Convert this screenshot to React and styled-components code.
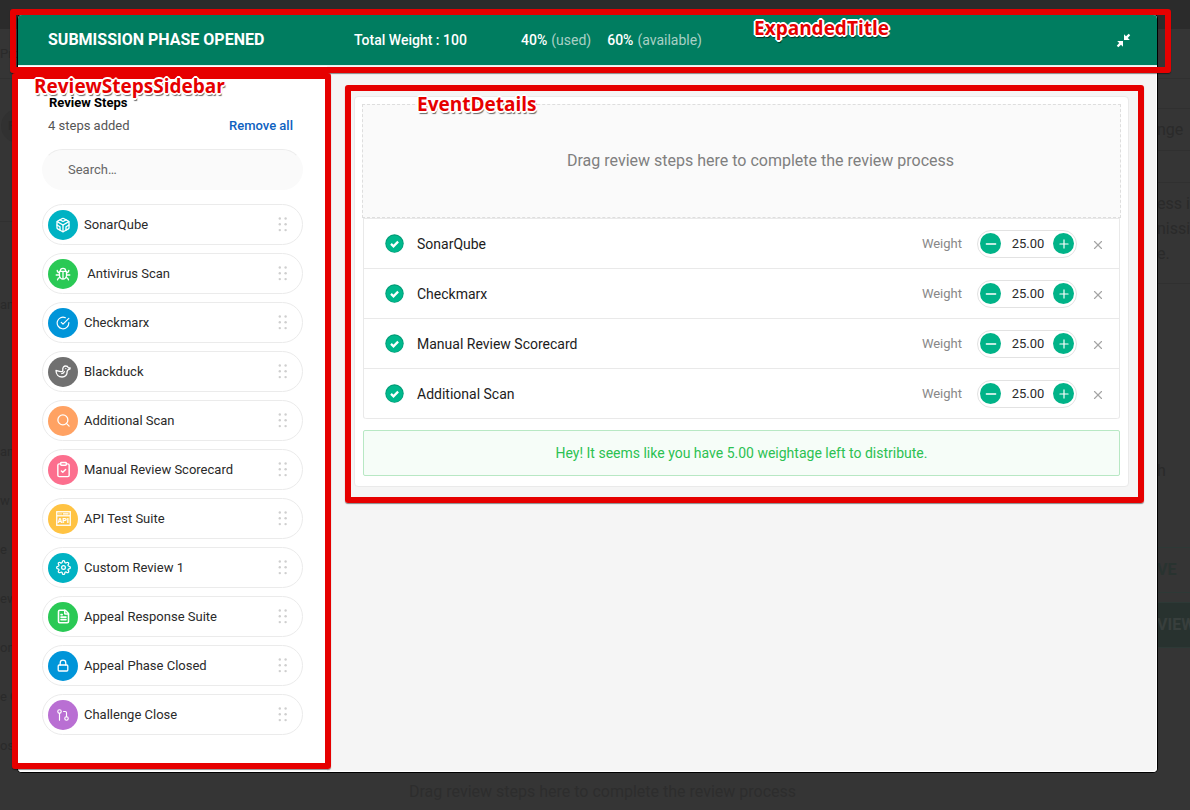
import React from 'react';
import styled, { createGlobalStyle, css } from 'styled-components';
import {
  FiCodesandbox,
  FiCheckCircle,
  FiSearch,
  FiSettings,
  FiGitPullRequest,
} from 'react-icons/fi';
import { ClipboardCheck, FileText, Minus, Plus, X } from 'lucide-react';

const GlobalStyle = createGlobalStyle`
  *, *::before, *::after { box-sizing: border-box; }
  body {
    margin: 0;
    background: #353535;
    color: #2a2a2a;
    font-family: Roboto, "Liberation Sans", sans-serif;
    font-size: 13px;
    line-height: 20px;
  }
  button, input { font: inherit; }
  h1, h2, p, ul { margin: 0; padding: 0; }
  ul { list-style: none; }
`;

const plainButton = css`
  display: inline-flex;
  align-items: center;
  justify-content: center;
  border: 0;
  padding: 0;
  background: none;
  cursor: pointer;
`;

/* ---------- page behind the dialog ---------- */

const Stage = styled.div`
  position: relative;
  display: flex;
  min-height: 100vh;
  padding: 15px 33px 38px 18px;
  overflow: hidden;
`;

const Backdrop = styled.div`
  position: absolute;
  inset: 0;
  display: grid;
  grid-template: 29px 1fr / 18px 1fr 33px;
  background: #353535;
  color: #2a2a2a;
  overflow: hidden;
`;

const BackdropHeader = styled.div`
  grid-column: 1 / -1;
  background: #2b2b2b;
`;

const BackdropColumn = styled.div`
  display: flex;
  flex-direction: column;
  overflow: hidden;
  white-space: nowrap;
`;

const BackdropLine = styled.div`
  display: flex;
  flex: none;
  align-items: center;
  height: ${(p) => p.$height}px;
  font-size: ${(p) => (p.$large ? 16 : 13)}px;
  border-bottom: ${(p) => (p.$rule ? '1px solid #303030' : '0')};
`;

const BackdropPill = styled.span`
  width: 60px;
  height: 34px;
  margin-left: 1px;
  padding: 7px;
  border-radius: 17px 0 0 17px;
  background: #313131;
  font-weight: 700;
`;

const BackdropAction = styled.div`
  display: flex;
  flex: none;
  align-items: center;
  height: 46px;
  margin-bottom: 9px;
  border: solid #2d3936;
  border-width: 1px 0;
  background: ${(p) => (p.$filled ? '#28322f' : 'transparent')};
  color: ${(p) => (p.$filled ? '#383f3d' : '#293330')};
  font-size: 16px;
  font-weight: 700;
`;

const BackdropCenter = styled.div`
  display: flex;
  align-items: flex-end;
`;

const BackdropHint = styled.p`
  width: 100%;
  padding: 0 0 8px 30px;
  text-align: center;
  font-size: 16px;
  color: #2d2d2d;
`;

/* ---------- annotations ---------- */

const Frame = styled.span`
  position: absolute;
  z-index: 2;
  inset: ${(p) => p.$inset};
  border: 6px solid #e60000;
  border-radius: 3px;
  box-shadow: 0 1px 1px rgba(0, 0, 0, 0.45);
  pointer-events: none;
`;

const FrameLabel = styled.span`
  position: absolute;
  z-index: 3;
  top: ${(p) => p.$top}px;
  left: ${(p) => p.$left};
  color: #e60000;
  font: 700 19px/24px "Open Sans", "Noto Sans", sans-serif;
  white-space: nowrap;
  text-shadow: -2px 0 #fff, 2px 0 #fff, 0 -2px #fff, 0 2px #fff,
    -1px -1px #fff, 1px -1px #fff, -1px 1px #fff, 1px 1px #fff,
    1px 3px 1px rgba(0, 0, 0, 0.6);
  pointer-events: none;
`;

/* ---------- dialog ---------- */

const Dialog = styled.main`
  position: relative;
  display: flex;
  flex: 1;
  flex-direction: column;
  min-width: 0;
  border-radius: 4px;
  background: #f5f5f5;
  box-shadow: inset -1px -1px #fff, 0 0 0 1px #000;
`;

const TitleBar = styled.header`
  position: relative;
  z-index: 1;
  display: flex;
  align-items: center;
  height: 51px;
  padding: 0 26px 0 30px;
  border-bottom: 1px solid #e4f0ec;
  border-radius: 4px 4px 0 0;
  background: #007d60;
  color: #fff;
`;

const PhaseTitle = styled.h1`
  flex: 0 0 306px;
  font-size: 16px;
  font-weight: 700;
`;

const WeightSummary = styled.div`
  display: flex;
  flex: 1;
  font-size: 14px;
  white-space: pre;
`;

const TotalWeight = styled.strong`
  flex: 0 0 167px;
  font-weight: 500;
`;

const Share = styled.span`
  margin-right: 16px;
  color: #a9d0c5;

  strong {
    margin-right: 4px;
    color: #fff;
    font-weight: 500;
  }
`;

const CollapseButton = styled.button`
  ${plainButton}
  color: #fff;
`;

const Content = styled.div`
  display: flex;
  flex: 1;
`;

const Sidebar = styled.aside`
  position: relative;
  flex: 0 0 309px;
  padding: 27px 24px 0;
  border-radius: 0 0 0 4px;
  background: #fff;
`;

const SidebarTitle = styled.h2`
  padding-left: 7px;
  color: #000;
  font-size: 13px;
  font-weight: 700;
`;

const SidebarMeta = styled.div`
  display: flex;
  justify-content: space-between;
  margin: 3px 0 13px;
  padding: 0 10px 0 6px;
  color: #555;
`;

const RemoveAll = styled.button`
  ${plainButton}
  color: #0d61bf;
  font-weight: 500;
`;

const Search = styled.input`
  display: block;
  width: 100%;
  height: 41px;
  padding: 0 25px;
  border: 1px solid #fafafa;
  border-top-color: #ececec;
  border-radius: 21px;
  background: #fafafa;
  color: #2a2a2a;
  outline: none;

  &::placeholder { color: #666; opacity: 1; }
`;

const StepList = styled.ul`
  display: flex;
  flex-direction: column;
  gap: 8px;
  margin: 14px 0 36px;
`;

const Step = styled.li`
  display: flex;
  align-items: center;
  gap: 6px;
  height: 41px;
  padding: 0 14px 0 5px;
  border: 1px solid #ebebeb;
  border-radius: 21px;
  cursor: grab;
`;

const StepIcon = styled.span`
  display: flex;
  flex: none;
  align-items: center;
  justify-content: center;
  width: 30px;
  height: 30px;
  border-radius: 50%;
  background: ${(p) => p.$color};
  color: #fff;
`;

const StepName = styled.span`
  flex: 1;
  white-space: pre;
`;

const Details = styled.section`
  flex: 1;
  min-width: 0;
  padding: 30px 28px 30px 27px;
`;

const Card = styled.div`
  position: relative;
  padding: 7px 7px 10px;
  border: 1px solid #eaeaea;
  border-radius: 4px;
  background: #fff;
`;

const DropZone = styled.p`
  display: flex;
  align-items: center;
  justify-content: center;
  height: 114px;
  padding-left: 38px;
  border: 1px dashed #dedede;
  background: #fafafa;
  color: #7f7f7f;
  font-size: 16px;
`;

const ReviewList = styled.ul`
  margin: 0 1px;
  border: solid #e9e9e9;
  border-width: 1px 1px 0;
  border-radius: 0 0 3px 3px;
`;

const Review = styled.li`
  display: flex;
  align-items: center;
  height: 50px;
  padding: 0 14px 0 21px;
  border-bottom: 1px solid #e9e9e9;

  &:last-child { border-radius: 0 0 3px 3px; }
`;

const ReviewName = styled.span`
  flex: 1;
  padding-left: 13px;
  color: #1c1c1c;
  font-size: 14px;
`;

const WeightLabel = styled.label`
  margin-right: 15px;
  color: #888;
`;

const Stepper = styled.div`
  display: flex;
  align-items: center;
  width: 100px;
  height: 28px;
  padding: 0 2px;
  border: 1px solid #e2e2e2;
  border-radius: 14px;
`;

const StepperButton = styled.button`
  ${plainButton}
  flex: none;
  width: 21px;
  height: 21px;
  border-radius: 50%;
  background: #00b388;
  color: #fff;
`;

const WeightInput = styled.input`
  flex: 1;
  min-width: 0;
  padding: 0 0 0 2px;
  border: 0;
  background: none;
  color: #2a2a2a;
  text-align: center;
  outline: none;
`;

const RemoveButton = styled.button`
  ${plainButton}
  width: 14px;
  margin-left: 14px;
  padding-top: 3px;
  color: #a5a5a5;
`;

const Notice = styled.p`
  display: flex;
  align-items: center;
  justify-content: center;
  height: 46px;
  margin: 11px 1px 0;
  border: 1px solid #b8e8c4;
  border-radius: 2px;
  background: #f6fdf8;
  color: #2cc152;
  font-size: 14px;
`;

/* ---------- drawings ---------- */

const BugIcon = () => (
  <svg width="16" height="16" viewBox="0 0 16 16" fill="none" stroke="currentColor" strokeWidth="1.3" strokeLinecap="round" strokeLinejoin="round" aria-hidden="true">
    <path d="M5.300 5a2.700 2.700 0 0 1 5.400 0M4.500 5.300h7V9.500a3.500 3.500 0 0 1-7 0zM8 6v6.700" />
    <path d="M4.500 6.700C3 6.600 2.300 5.800 2.200 4.400M11.500 6.700c1.500-.1 2.200-.9 2.300-2.300M4.300 9H1.200M11.700 9h3.100M5 11.300c-1.500.2-2.300 1-2.500 2.600M11 11.300c1.500.2 2.300 1 2.500 2.600" />
  </svg>
);

const DuckIcon = () => (
  <svg width="16" height="13" viewBox="0 0 16 13" fill="none" stroke="currentColor" strokeWidth="1.3" strokeLinecap="round" strokeLinejoin="round" aria-hidden="true">
    <path d="M1 5.500c1.500.3 3 1.200 5 1.200 1.800 0 2-1 1.800-2.200A2.900 2.900 0 0 1 10.600 1c1.400 0 2.400.8 2.800 1.900h1.800l-.4 1.300-1.700.5c-.3.7-.8 1.200-1 1.800.3 3.200-2 5.500-5 5.500C3.600 12 1 9.500 1 5.500z" />
    <path d="M9.300 6.700c-.3 1.200-1.300 1.900-2.600 1.900" />
    <circle cx="10.800" cy="3.600" r=".7" fill="currentColor" stroke="none" />
  </svg>
);

const ApiText = styled.text`
  fill: currentColor;
  stroke: none;
  font: 900 7px Roboto, sans-serif;
`;

const ApiIcon = () => (
  <svg width="15" height="15" viewBox="0 0 15 15" fill="none" stroke="currentColor" aria-hidden="true">
    <rect x=".75" y=".75" width="13.5" height="13.5" strokeWidth="1.3" />
    <path d="M1 4.800h13" strokeWidth="1.300" />
    <path d="M2.500 2.900h1M4.500 2.900h1M7 2.900h5.500" strokeWidth="1.200" />
    <ApiText x="7.5" y="12.2" textAnchor="middle">API</ApiText>
  </svg>
);

const LockIcon = () => (
  <svg width="14" height="14" viewBox="0 0 14 14" fill="none" stroke="currentColor" strokeWidth="1.3" strokeLinejoin="round" strokeLinecap="round" aria-hidden="true">
    <rect x="2.200" y="6" width="9.600" height="6" rx="1" />
    <path d="M4.200 6V4a2.800 2.800 0 0 1 5.600 0v2" />
  </svg>
);

const CollapseIcon = () => (
  <svg width="15" height="15" viewBox="0 0 15 15" fill="currentColor" aria-hidden="true">
    <path d="M8 7V1.200l2 2L12.700.8l1.500 1.500L11.800 5l2 2zM7 8v5.800l-2-2-2.700 2.400L.8 12.700 3.200 10l-2-2z" />
  </svg>
);

const DoneIcon = () => (
  <svg width="19" height="19" viewBox="0 0 19 19" aria-hidden="true">
    <circle cx="9.5" cy="9.5" r="9.200" fill="#009b76" />
    <circle cx="9.5" cy="9.900" r="8.300" fill="#00b88c" />
    <path d="M6 9.900l2.500 2.400 4.600-4.700" fill="none" stroke="#fff" strokeWidth="2.300" />
  </svg>
);

const Grip = () => (
  <svg width="10" height="15" viewBox="0 0 10 15" fill="#cfcfcf" aria-hidden="true">
    {[1.5, 7.3, 13.1].map((y) => (
      <React.Fragment key={y}>
        <circle cx="1.800" cy={y} r="1.200" />
        <circle cx="7.600" cy={y} r="1.200" />
      </React.Fragment>
    ))}
  </svg>
);

/* ---------- data ---------- */

const steps = [
  { name: 'SonarQube', color: '#00b2c3', icon: <FiCodesandbox size={16} /> },
  { name: ' Antivirus Scan', color: '#2ac955', icon: <BugIcon /> },
  { name: 'Checkmarx', color: '#0095d9', icon: <FiCheckCircle size={14} /> },
  { name: 'Blackduck', color: '#707070', icon: <DuckIcon /> },
  { name: 'Additional Scan', color: '#ffa263', icon: <FiSearch size={15} /> },
  { name: 'Manual Review Scorecard', color: '#fc6f8e', icon: <ClipboardCheck size={17} strokeWidth={2} /> },
  { name: 'API Test Suite', color: '#ffc343', icon: <ApiIcon /> },
  { name: 'Custom Review 1', color: '#00b2c3', icon: <FiSettings size={15} /> },
  { name: 'Appeal Response Suite', color: '#2ac955', icon: <FileText size={15} strokeWidth={2.5} /> },
  { name: 'Appeal Phase Closed', color: '#0095d9', icon: <LockIcon /> },
  { name: 'Challenge Close', color: '#b96fd3', icon: <FiGitPullRequest size={14} /> },
];

const reviews = ['SonarQube', 'Checkmarx', 'Manual Review Scorecard', 'Additional Scan'];

const backdropSteps = ['an', '', '', 'an', 'w', 'e', 'ew', 'ons', 'e C', 'ose'];

const PageBackdrop = () => (
  <Backdrop aria-hidden="true">
    <BackdropHeader />
    <BackdropColumn>
      <BackdropLine $height={50} $rule>Pro</BackdropLine>
      <BackdropLine $height={94}><BackdropPill>R</BackdropPill></BackdropLine>
      <BackdropLine $height={49} $rule />
      <BackdropLine $height={58} />
      {backdropSteps.map((text, i) => (
        <BackdropLine key={i} $height={49}>{text}</BackdropLine>
      ))}
    </BackdropColumn>
    <BackdropCenter>
      <BackdropHint>Drag review steps here to complete the review process</BackdropHint>
    </BackdropCenter>
    <BackdropColumn>
      <BackdropLine $height={50} $rule />
      <BackdropLine $height={30} $rule />
      <BackdropLine $height={42} $large $rule>nge</BackdropLine>
      <BackdropLine $height={32} $rule />
      <BackdropLine $height={8} />
      <BackdropLine $height={25} $large>ess i</BackdropLine>
      <BackdropLine $height={25} $large>nissi</BackdropLine>
      <BackdropLine $height={25} $large>e.</BackdropLine>
      <BackdropLine $height={18} $rule />
      <BackdropLine $height={174} />
      <BackdropLine $height={25} $large>h</BackdropLine>
      <BackdropLine $height={64} />
      <BackdropAction>VE</BackdropAction>
      <BackdropAction $filled>VIEW</BackdropAction>
    </BackdropColumn>
  </Backdrop>
);

const ReviewRow = ({ name, index }) => (
  <Review>
    <DoneIcon />
    <ReviewName>{name}</ReviewName>
    <WeightLabel htmlFor={`weight-${index}`}>Weight</WeightLabel>
    <Stepper>
      <StepperButton type="button" aria-label={`Decrease weight of ${name}`}>
        <Minus size={16} strokeWidth={2} />
      </StepperButton>
      <WeightInput id={`weight-${index}`} defaultValue="25.00" inputMode="decimal" />
      <StepperButton type="button" aria-label={`Increase weight of ${name}`}>
        <Plus size={14} strokeWidth={2} />
      </StepperButton>
    </Stepper>
    <RemoveButton type="button" aria-label={`Remove ${name}`}>
      <X size={16} strokeWidth={2} />
    </RemoveButton>
  </Review>
);

export default function App() {
  return (
    <>
      <GlobalStyle />
      <Stage>
        <PageBackdrop />
        <Dialog>
          <TitleBar>
            <PhaseTitle>SUBMISSION PHASE OPENED</PhaseTitle>
            <WeightSummary>
              <TotalWeight>Total Weight : 100</TotalWeight>
              <Share><strong>40%</strong>(used)</Share>
              <Share><strong>60%</strong>(available)</Share>
            </WeightSummary>
            <CollapseButton type="button" aria-label="Collapse">
              <CollapseIcon />
            </CollapseButton>
            <Frame $inset="-6px -14px -8px -8px" />
            <FrameLabel $top={1} $left="736px">ExpandedTitle</FrameLabel>
          </TitleBar>
          <Content>
            <Sidebar>
              <Frame $inset="7px -4px 3px -6px" />
              <FrameLabel $top={8} $left="16px">ReviewStepsSidebar</FrameLabel>
              <SidebarTitle>Review Steps</SidebarTitle>
              <SidebarMeta>
                <span>4 steps added</span>
                <RemoveAll type="button">Remove all</RemoveAll>
              </SidebarMeta>
              <Search type="text" placeholder="Search…" aria-label="Search review steps" />
              <StepList>
                {steps.map((step) => (
                  <Step key={step.name}>
                    <StepIcon $color={step.color}>{step.icon}</StepIcon>
                    <StepName>{step.name}</StepName>
                    <Grip />
                  </Step>
                ))}
              </StepList>
            </Sidebar>
            <Details>
              <Card>
                <Frame $inset="-12px -16px -17px -10px" />
                <FrameLabel $top={-5} $left="62px">EventDetails</FrameLabel>
                <DropZone>Drag review steps here to complete the review process</DropZone>
                <ReviewList>
                  {reviews.map((name, i) => (
                    <ReviewRow key={name} name={name} index={i} />
                  ))}
                </ReviewList>
                <Notice>Hey! It seems like you have 5.00 weightage left to distribute.</Notice>
              </Card>
            </Details>
          </Content>
        </Dialog>
      </Stage>
    </>
  );
}
